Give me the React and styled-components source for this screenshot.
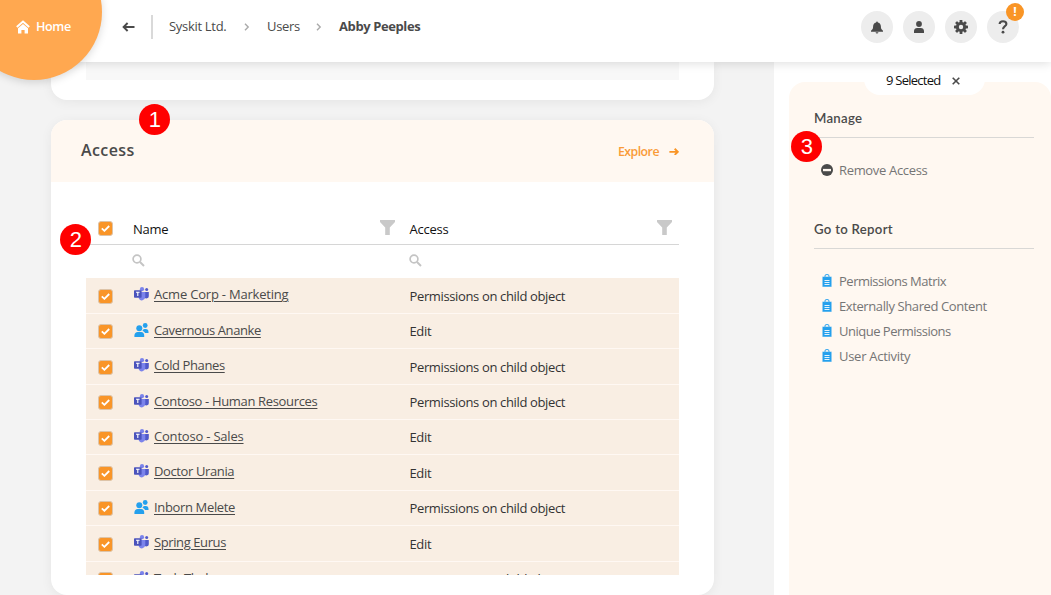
import React from "react";
import styled, { createGlobalStyle } from "styled-components";

const Global = createGlobalStyle`
  *, *::before, *::after { box-sizing: border-box; }
  body { margin: 0; overflow: hidden; background: #fff; color: #4a4a4a; font: 13px/18px "Open Sans", "Noto Sans", sans-serif; letter-spacing: -0.25px; }
  svg { display: block; flex: none; }
`;
const Page = styled.div`height: 595px; width: 1051px; overflow: hidden; position: relative; display: flex; flex-direction: column;`;
const Header = styled.header`
  position: relative; z-index: 2; flex: none; height: 62px; background: #fff; box-shadow: 0 1px 10px rgba(0,0,0,.14);
  display: flex; align-items: flex-start; padding-left: 122px;
`;
const HomeDisc = styled.a`
  position: absolute; z-index: 3; left: -34px; top: -56px; width: 136px; height: 136px; border-radius: 50%;
  background: #ffa850; box-shadow: 0 2px 8px rgba(0,0,0,.15); color: #fff; font-weight: 600; font-size: 12.6px; letter-spacing: -0.4px;
  display: flex; align-items: flex-start; gap: 6px; padding: 74px 0 0 50px;
  svg { margin-top: 2px; }
`;
const Crumbs = styled.nav`
  display: flex; align-items: center; height: 24px; margin-top: 15px; flex: 1;
`;
const Divider = styled.i`width: 2px; height: 24px; background: #d9d9d9; margin: 0 16px 0 16px;`;
const Crumb = styled.span`
  white-space: nowrap; font-weight: ${p => (p.$current ? 700 : 400)}; width: ${p => p.$w}px; letter-spacing: ${p => p.$ls || "-0.3px"};
  padding-bottom: 2px;
`;
const Chevron = styled.span`display: flex; margin: 0 17px 0 18px;`;
const Actions = styled.div`display: flex; gap: 10px; padding: 11px 32px 0 0;`;
const RoundButton = styled.button`
  position: relative; width: 32px; height: 32px; border: 0; padding: 0; border-radius: 50%; background: #ededed;
  display: flex; align-items: center; justify-content: center;
`;
const Alert = styled.span`
  position: absolute; left: 19px; top: -8px; width: 18px; height: 18px; border-radius: 50%; background: #f99526; color: #fff;
  font: 700 12px/18px "Open Sans", sans-serif; text-align: center; letter-spacing: 0;
`;
const Body = styled.div`display: flex; flex: 1; min-height: 0;`;
const Main = styled.main`width: 774px; background: #f3f3f3; padding-left: 51px; overflow: hidden;`;
const Card = styled.section`
  width: 663px; background: #fff; overflow: hidden; box-shadow: 0 2px 12px rgba(0,0,0,.06);
  border-radius: ${p => (p.$tail ? "0 0 16px 16px" : "16px")};
  height: ${p => p.$h}px; margin-bottom: 20px;
`;
const Strip = styled.div`margin: 0 35px; height: 18px; background: #f8f8f8;`;
const CardHead = styled.div`
  height: 62px; background: #fff8f1; display: flex; justify-content: space-between; align-items: center; padding: 0 35px 2px 30px;
`;
const Title = styled.h2`margin: 0; font-size: 16px; line-height: 22px; font-weight: 600; letter-spacing: 0.4px;`;
const Explore = styled.a`
  display: flex; align-items: center; gap: 10px; color: #f99b38; font-weight: 600; font-size: 12.3px; padding-top: 3px; letter-spacing: -0.5px;
`;
const Table = styled.div`margin: 32px 35px 0; height: 361px; overflow: hidden;`;
const HeadRow = styled.div`
  height: 31px; border-bottom: 1px solid #d6d6d6; display: grid; grid-template-columns: 47px 276.5px 1fr; color: #111;
  padding: 6px 0 0 0;
`;
const HeadCell = styled.div`
  display: flex; justify-content: space-between; align-items: flex-start; padding-right: ${p => p.$pr}px; line-height: 18px;
`;
const CheckCell = styled.div`padding-left: 12.4px; padding-top: ${p => p.$pt || 0}px;`;
const SearchRow = styled.div`height: 33.4px; display: grid; grid-template-columns: 46.4px 276.6px 1fr; padding-top: 9px;`;
const Row = styled.div`
  height: 35.4px; background: #f9eee3; border-bottom: 1px solid #fff8f3; display: grid; grid-template-columns: 47px 276.5px 1fr;
`;
const NameCell = styled.div`display: flex; align-items: flex-start; gap: 5px; padding: 7px 0 0 1px; svg { margin-top: 2px; }`;
const Link = styled.a`text-decoration: underline; text-underline-offset: 2px; white-space: nowrap; letter-spacing: ${p => p.$ls}px;`;
const AccessCell = styled.div`padding-top: 8.5px; color: #333; letter-spacing: -0.36px;`;
const Check = styled.span`
  display: flex; width: 15px; height: 15px; border-radius: 3px; background: #f99528; border: 1px solid #ddc4a9; align-items: center; justify-content: center;
`;
const Side = styled.aside`flex: 1; background: #fff; padding: 20px 0 0 15px;`;
const Panel = styled.div`display: flow-root; height: 513px; background: #fff8f1; border-radius: 16px 16px 0 0; padding: 0 17px 0 25px;`;
const Pill = styled.div`
  height: 28px; width: 121px; margin: -15px 0 0 50px; border-radius: 0 0 16px 16px; background: #fff; color: #111;
  display: flex; align-items: center; gap: 12px; padding: 0 0 2px 22px; white-space: nowrap; letter-spacing: -0.75px;
  svg { margin-top: 2px; }
`;
const Section = styled.h3`
  margin: 0 0 ${p => p.$mb}px; padding-top: ${p => p.$pt}px; height: ${p => p.$h}px; border-bottom: 1px solid #d9d8d6;
  font: 600 13.2px/18px Lato, "Open Sans", sans-serif; letter-spacing: .28px;
`;
const Item = styled.div`
  display: flex; align-items: center; gap: ${p => p.$gap || 7}px; height: 25px; padding-left: ${p => p.$pl || 8}px; color: #757575;
  letter-spacing: ${p => p.$ls}px; white-space: nowrap;
`;
const Marker = styled.div`
  position: absolute; z-index: 5; left: ${p => p.$x}px; top: ${p => p.$y}px; width: 31px; height: 31px; border-radius: 50%;
  background: #f00; color: #fff; font: 22px/32px "Liberation Sans", Arial, sans-serif; text-align: center; letter-spacing: 0;
`;

const HomeIcon = () => (
  <svg width="14" height="14" viewBox="0 0 14 14">
    <path d="M.8 7 7 1.5 13.2 7" fill="none" stroke="#fff" strokeWidth="2" />
    <path d="M2 8.2 7 4l5 4.2V13.5H8.6V10H5.4v3.5H2z" fill="#fff" />
  </svg>
);
const Arrow = ({ w = 13, c = "#4a4a4a", right, sw = 1.9 }) => (
  <svg width={w} height={w * 10 / 13} viewBox="0 0 13 10" style={right ? { transform: "scaleX(-1)" } : undefined}>
    <path d="M12.5 5H1.8M5.6 1 1.6 5l4 4" fill="none" stroke={c} strokeWidth={sw} />
  </svg>
);
const ChevronIcon = () => (
  <svg width="6" height="8" viewBox="0 0 6 8"><path d="M1 .8 4.2 4 1 7.2" fill="none" stroke="#aaa" strokeWidth="1.4" /></svg>
);
const Bell = () => (
  <svg width="12" height="13" viewBox="0 0 12 13" fill="#4a4a4a">
    <path d="M5.1 1.4a.9.9 0 0 1 1.8 0C9 1.8 9.9 3.4 9.9 5.5c0 2.4.6 3 2.1 4.2v1H0v-1c1.5-1.2 2.1-1.8 2.1-4.2C2.1 3.4 3 1.8 5.1 1.4zM4.6 11.3h2.8a1.4 1.2 0 0 1-2.8 0z" />
  </svg>
);
const Person = () => (
  <svg width="10" height="12" viewBox="0 0 10 12" fill="#4a4a4a"><circle cx="5" cy="3" r="2.9" /><path d="M0 12V10a3.3 3.3 0 0 1 3.3-3.1h3.4A3.3 3.3 0 0 1 10 10v2z" /></svg>
);
const Gear = () => (
  <svg width="14" height="14" viewBox="-7 -7 14 14" fill="#4a4a4a">
    {[0, 45, 90, 135].map(a => <rect key={a} x="-1.4" y="-7" width="2.8" height="14" rx=".6" transform={`rotate(${a})`} />)}
    <circle r="5.1" /><circle r="2.2" fill="#ededed" />
  </svg>
);
const Question = () => (
  <svg width="10" height="14" viewBox="0 0 10 14"><path d="M1.6 4C1.7 2 3 1.2 5 1.2s3.4 1 3.4 2.7C8.4 6.2 5 6.2 5 9.3" fill="none" stroke="#4a4a4a" strokeWidth="2.1" /><circle cx="5" cy="12.2" r="1.4" fill="#4a4a4a" /></svg>
);
const Funnel = () => <svg width="15" height="15" viewBox="0 0 15 15" fill="#c9c9c9"><path d="M0 0h15v2L9.8 7.5V15H5.2V7.5L0 2z" /></svg>;
const Search = () => (
  <svg width="13" height="13" viewBox="0 0 13 13" fill="none" stroke="#c4c4c4"><circle cx="5" cy="5" r="3.9" strokeWidth="1.7" /><path d="m8 8 4 4" strokeWidth="2" /></svg>
);
const Tick = () => (
  <Check><svg width="9" height="7" viewBox="0 0 9 7"><path d="M.8 3.3 3.4 5.8 8.2 1" fill="none" stroke="#fff" strokeWidth="1.8" /></svg></Check>
);
const Teams = () => (
  <svg width="15" height="14" viewBox="0 0 15 14">
    <circle cx="12.7" cy="2.6" r="1.5" fill="#5059c9" /><path d="M10.5 5h4.3v4.2a2.3 2.3 0 0 1-4.3 1z" fill="#5059c9" />
    <circle cx="8" cy="2.2" r="2.1" fill="#7b83eb" /><path d="M4.8 5h6.5v5a3.5 3.8 0 0 1-6.5 1.5z" fill="#7b83eb" />
    <rect y="3.3" width="7.6" height="7.4" rx=".7" fill="#4b53bc" /><path d="M2 5.2h3.6M3.8 5.2V9" stroke="#fff" strokeWidth="1.1" />
  </svg>
);
const People = () => (
  <svg width="15" height="14" viewBox="0 0 15 14" fill="#24a0ed">
    <circle cx="5.3" cy="5.3" r="3" /><path d="M.4 14v-1.6C.4 10.3 2 9.3 3.6 9.1h3.6c1.8.2 3 1.4 3 3.3V14z" />
    <circle cx="11.2" cy="2.5" r="2.4" /><path d="M8.6 8c0-1 .6-2 2-2h1.2C13.6 6 14.5 7.2 14.5 9v1h-3.5C10.6 9 9.6 8.3 8.6 8z" />
  </svg>
);
const Minus = () => <svg width="12" height="12" viewBox="0 0 12 12"><circle cx="6" cy="6" r="6" fill="#4a4a4a" /><rect x="2" y="4.9" width="8" height="2.3" fill="#fff8f1" /></svg>;
const Clipboard = () => (
  <svg width="10" height="13" viewBox="0 0 10 13"><rect y="2.5" width="10" height="10.5" rx=".8" fill="#24a0ed" opacity=".5" /><rect x="1" y="3" width="8" height="9.5" fill="#24a0ed" />
    <path d="M3 3.4V2.2a2 1.7 0 0 1 4 0v1.2" fill="none" stroke="#45adef" strokeWidth="1.1" /><path d="M2.5 6.5h5M2.5 8.5h5M2.5 10.5h5" stroke="#e3f3fc" strokeWidth="1" /></svg>
);
const Cross = () => <svg width="8" height="8" viewBox="0 0 8 8"><path d="m.7.7 6.6 6.6M7.3.7.7 7.3" stroke="#4a4a4a" strokeWidth="1.6" /></svg>;

const child = "Permissions on child object";
const rows = [
  { name: "Acme Corp - Marketing", access: child, ls: -0.2 },
  { name: "Cavernous Ananke", access: "Edit", group: true, ls: -0.41 },
  { name: "Cold Phanes", access: child, ls: -0.4 },
  { name: "Contoso - Human Resources", access: child, ls: -0.34 },
  { name: "Contoso - Sales", access: "Edit", ls: -0.2 },
  { name: "Doctor Urania", access: "Edit", ls: -0.38 },
  { name: "Inborn Melete", access: child, group: true, ls: -0.35 },
  { name: "Spring Eurus", access: "Edit", ls: -0.4 },
  { name: "Tech Thebe", access: child, ls: -0.4 },
];
const reports = [
  ["Permissions Matrix", -0.48], ["Externally Shared Content", -0.4], ["Unique Permissions", -0.5], ["User Activity", -0.28],
];

export default function App() {
  return (
    <Page>
      <Global />
      <Header>
        <HomeDisc><HomeIcon />Home</HomeDisc>
        <Crumbs>
          <Arrow /><Divider />
          <Crumb $w={57}>Syskit Ltd.</Crumb><Chevron><ChevronIcon /></Chevron>
          <Crumb $w={31}>Users</Crumb><Chevron><ChevronIcon /></Chevron>
          <Crumb $current $w={84} $ls="-0.4px">Abby Peeples</Crumb>
        </Crumbs>
        <Actions>
          <RoundButton><Bell /></RoundButton><RoundButton><Person /></RoundButton><RoundButton><Gear /></RoundButton>
          <RoundButton><Question /><Alert>!</Alert></RoundButton>
        </Actions>
      </Header>
      <Body>
        <Main>
          <Card $tail $h={38}><Strip /></Card>
          <Card $h={475}>
            <CardHead><Title>Access</Title><Explore>Explore <Arrow right w={10} c="#f99526" sw={2.4} /></Explore></CardHead>
            <Table>
              <HeadRow>
                <CheckCell $pt={1}><Tick /></CheckCell>
                <HeadCell $pr={14.6}><span>Name</span><Funnel /></HeadCell>
                <HeadCell $pr={7.5}><span>Access</span><Funnel /></HeadCell>
              </HeadRow>
              <SearchRow><span /><Search /><Search /></SearchRow>
              {rows.map(r => (
                <Row key={r.name}>
                  <CheckCell $pt={10.6}><Tick /></CheckCell>
                  <NameCell>{r.group ? <People /> : <Teams />}<Link $ls={r.ls}>{r.name}</Link></NameCell>
                  <AccessCell>{r.access}</AccessCell>
                </Row>
              ))}
            </Table>
          </Card>
        </Main>
        <Side>
          <Panel>
            <Pill>9 Selected <Cross /></Pill>
            <Section $pt={14} $h={43} $mb={19}>Manage</Section>
            <Item $gap={6} $pl={7} $ls={-0.33}><Minus />Remove Access</Item>
            <Section $pt={38} $h={67} $mb={19}>Go to Report</Section>
            {reports.map(([label, ls]) => (
              <Item key={label} $ls={ls}><Clipboard />{label}</Item>
            ))}
          </Panel>
        </Side>
      </Body>
      <Marker $x={139.4} $y={104.4}>1</Marker>
      <Marker $x={60.4} $y={224.4}>2</Marker>
      <Marker $x={791.4} $y={131.4}>3</Marker>
    </Page>
  );
}
